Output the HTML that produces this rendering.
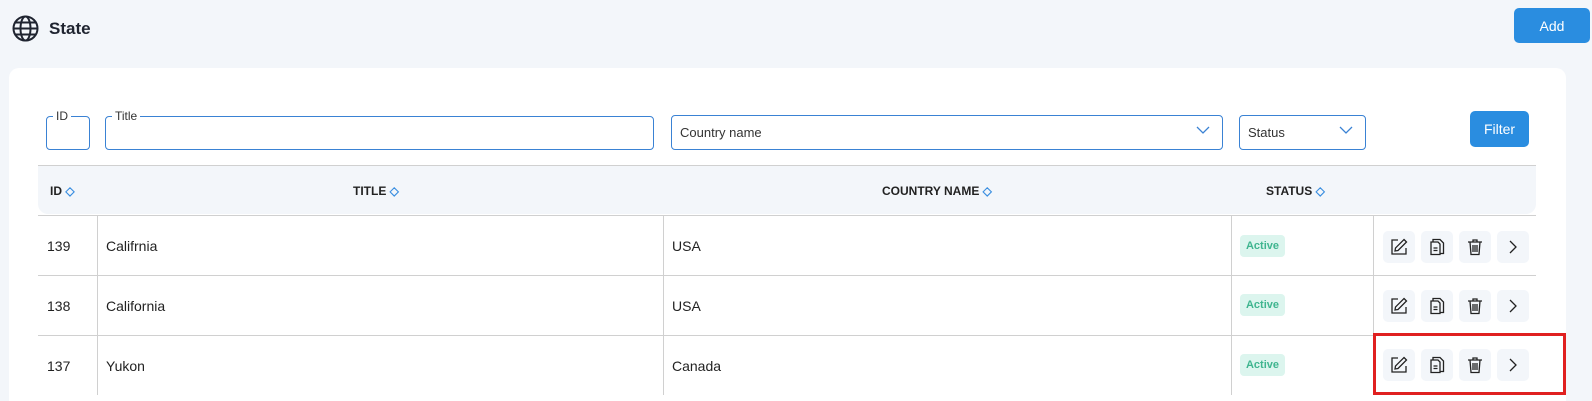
<!DOCTYPE html>
<html><head><style>
*{box-sizing:border-box;margin:0;padding:0}
html,body{width:1592px;height:401px;overflow:hidden;margin:0}
body{background:#f3f6fa;font-family:"Liberation Sans",sans-serif;color:#1f2430}
#wrap{position:relative;width:1592px;height:401px;overflow:hidden}
.abs{position:absolute}
.card{left:9px;top:68px;width:1557px;height:333px;background:#fff;border-radius:10px 10px 0 0}
.btn{background:#2a8de0;color:#fff;border-radius:5px;font-size:14px;display:flex;align-items:center;justify-content:center}
.inp{border:1px solid #3a82d4;border-radius:4px;background:#fff}
.lbl{position:absolute;top:-8px;left:6px;background:#fff;padding:0 3px;font-size:12px;color:#333}
.sel{font-size:13px;color:#333;padding-left:8px;display:flex;align-items:center}
.chev{position:absolute;right:12px;top:9px}
.th{font-size:12px;font-weight:bold;color:#222;top:184px}
.td{font-size:14px;color:#222}
.hl{height:1px;background:#d0d0d0}
.vl{width:1px;background:#d0d0d0}
.badge{background:#dcf5ee;color:#3fb58f;font-size:11px;font-weight:bold;border-radius:4px;width:45px;height:22px;display:flex;align-items:center;justify-content:center}
.ab{width:32px;height:32px;background:#f3f6fa;border-radius:5px;display:flex;align-items:center;justify-content:center}
</style></head><body><div id="wrap">
<svg class="abs" style="left:12px;top:15px" width="27" height="27" viewBox="0 0 27 27" fill="none" stroke="#1f2430" stroke-width="2"><circle cx="13.5" cy="13.5" r="12"/><ellipse cx="13.5" cy="13.5" rx="5" ry="12"/><line x1="1.5" y1="13.5" x2="25.5" y2="13.5"/><line x1="3.5" y1="7.5" x2="23.5" y2="7.5"/><line x1="3.5" y1="19.5" x2="23.5" y2="19.5"/></svg>
<div class="abs" style="left:49px;top:19px;font-size:17px;font-weight:bold">State</div>
<div class="abs btn" style="left:1514px;top:8px;width:76px;height:35px">Add</div>
<div class="abs card"></div>
<div class="abs inp" style="left:46px;top:116px;width:44px;height:34px"><span class="lbl">ID</span></div>
<div class="abs inp" style="left:105px;top:116px;width:549px;height:34px"><span class="lbl">Title</span></div>
<div class="abs inp sel" style="left:671px;top:115px;width:552px;height:35px">Country name<svg class="chev" width="14" height="10"><path d="M1 2l6 6 6-6" stroke="#3a82d4" fill="none" stroke-width="1.3"/></svg></div>
<div class="abs inp sel" style="left:1239px;top:115px;width:127px;height:35px">Status<svg class="chev" width="14" height="10"><path d="M1 2l6 6 6-6" stroke="#3a82d4" fill="none" stroke-width="1.3"/></svg></div>
<div class="abs btn" style="left:1470px;top:111px;width:59px;height:36px">Filter</div>
<div class="abs hl" style="left:38px;top:165px;width:1498px"></div>
<div class="abs" style="left:38px;top:166px;width:1498px;height:48px;background:#f3f6fa;border-radius:0 0 10px 10px"></div>
<div class="abs th" style="left:50px">ID <span style="color:#3a8ee0">◇</span></div>
<div class="abs th" style="left:353px">TITLE <span style="color:#3a8ee0">◇</span></div>
<div class="abs th" style="left:882px">COUNTRY NAME <span style="color:#3a8ee0">◇</span></div>
<div class="abs th" style="left:1266px">STATUS <span style="color:#3a8ee0">◇</span></div>
<div class="abs hl" style="left:38px;top:215px;width:1498px"></div>
<div class="abs hl" style="left:38px;top:275px;width:1498px"></div>
<div class="abs hl" style="left:38px;top:335px;width:1498px"></div>
<div class="abs vl" style="left:97px;top:215px;height:180px"></div>
<div class="abs vl" style="left:663px;top:215px;height:180px"></div>
<div class="abs vl" style="left:1231px;top:215px;height:180px"></div>
<div class="abs vl" style="left:1373px;top:215px;height:120px"></div>
<div class="abs td" style="left:47px;top:238px">139</div><div class="abs td" style="left:106px;top:238px">Califrnia</div><div class="abs td" style="left:672px;top:238px">USA</div>
<div class="abs td" style="left:47px;top:298px">138</div><div class="abs td" style="left:106px;top:298px">California</div><div class="abs td" style="left:672px;top:298px">USA</div>
<div class="abs td" style="left:47px;top:358px">137</div><div class="abs td" style="left:106px;top:358px">Yukon</div><div class="abs td" style="left:672px;top:358px">Canada</div>
<div class="abs badge" style="left:1240px;top:235px">Active</div>
<div class="abs badge" style="left:1240px;top:294px">Active</div>
<div class="abs badge" style="left:1240px;top:354px">Active</div>
<div id="acts"></div>
<div class="abs" style="left:1373px;top:333px;width:193px;height:62px;border:3px solid #e02020"></div>
</div>
<script>
var ic=['<svg width="18" height="18" viewBox="0 0 18 18" fill="none" stroke="#222" stroke-width="1.3"><path d="M8 2H2v14h14v-6"/><path d="M14 1.5l2.5 2.5L8 12.5 5 13l.5-3z"/></svg>',
'<svg width="18" height="18" viewBox="0 0 18 18" fill="none" stroke="#222" stroke-width="1.3"><path d="M5 4V1.5h7l3.5 3.5v10.5H12"/><path d="M3 4h7l2 2v10.5H3z"/><path d="M5.5 10h4M5.5 12.5h4"/></svg>',
'<svg width="18" height="18" viewBox="0 0 18 18" fill="none" stroke="#222" stroke-width="1.3"><path d="M2 4h14M7 4V2h4v2M4 4l1 12.5h8L14 4M7 7v7M9 7v7M11 7v7"/></svg>',
'<svg width="18" height="18" viewBox="0 0 18 18" fill="none" stroke="#222" stroke-width="1.3"><path d="M6 3l6 6-6 6"/></svg>'];
var h='',ys=[231,290,349],xs=[1383,1421,1459,1497];
ys.forEach(function(y){xs.forEach(function(x,i){h+='<div class="abs ab" style="left:'+x+'px;top:'+y+'px">'+ic[i]+'</div>';});});
document.getElementById('acts').innerHTML=h;
</script>
</body></html>
